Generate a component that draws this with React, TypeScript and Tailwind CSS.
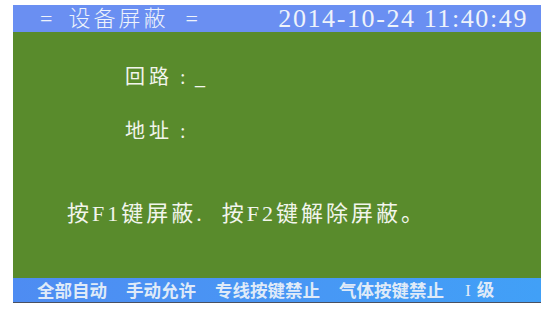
export default function App() {
  const serif = { fontFamily: '"Liberation Serif", "Noto Sans CJK SC", serif' };
  return (
    <div className="w-[560px] h-[313px] bg-white pt-[5px] pl-[13px]">
      <div className="w-[528px] h-[298px] flex flex-col">
        {/* Header */}
        <div
          className="h-[27px] bg-[#6a8ff2] text-[#eef3fb] flex items-center pl-[27px] pr-[13px] justify-between"
          style={serif}
        >
          <div className="flex items-center text-[22px] leading-none">
            <span>=</span>
            <span className="ml-[16px] tracking-[3px] font-light">设备屏蔽</span>
            <span className="ml-[17px]">=</span>
          </div>
          <div className="text-[26px] leading-none tracking-[1.6px]">2014-10-24 11:40:49</div>
        </div>

        {/* Body */}
        <div className="flex-1 bg-[#598b2c] text-[#f2f5ec] flex flex-col" style={serif}>
          <div className="pl-[112px] pt-[33px] h-[24px] leading-[24px] text-[20px] flex items-center box-content">
            <span className="tracking-[4px]">回路</span>
            <span className="ml-[7px] w-[15px]">:</span>
            <span>_</span>
          </div>
          <div className="pl-[112px] mt-[30px] h-[24px] leading-[24px] text-[20px] flex items-center">
            <span className="tracking-[4px]">地址</span>
            <span className="ml-[7px]">:</span>
          </div>
          <div className="pl-[54px] mt-[59px] h-[24px] leading-[24px] text-[22px] tracking-[3px] whitespace-pre">
            按F1键屏蔽.  按F2键解除屏蔽。
          </div>
        </div>

        {/* Footer */}
        <div
          className="h-[25px] bg-gradient-to-r from-[#4e8cf2] to-[#41a0f7] text-[#dfeaf8] flex items-center pl-[24px] gap-[19px] text-[17.5px] font-bold leading-none border-b border-[#4a5060]"
          style={{ fontFamily: '"Noto Sans CJK SC", sans-serif' }}
        >
          <span>全部自动</span>
          <span>手动允许</span>
          <span>专线按键禁止</span>
          <span>气体按键禁止</span>
          <span className="ml-[2px]">
            <span style={serif} className="font-normal mr-[6px]">I</span>级
          </span>
        </div>
      </div>
    </div>
  );
}
